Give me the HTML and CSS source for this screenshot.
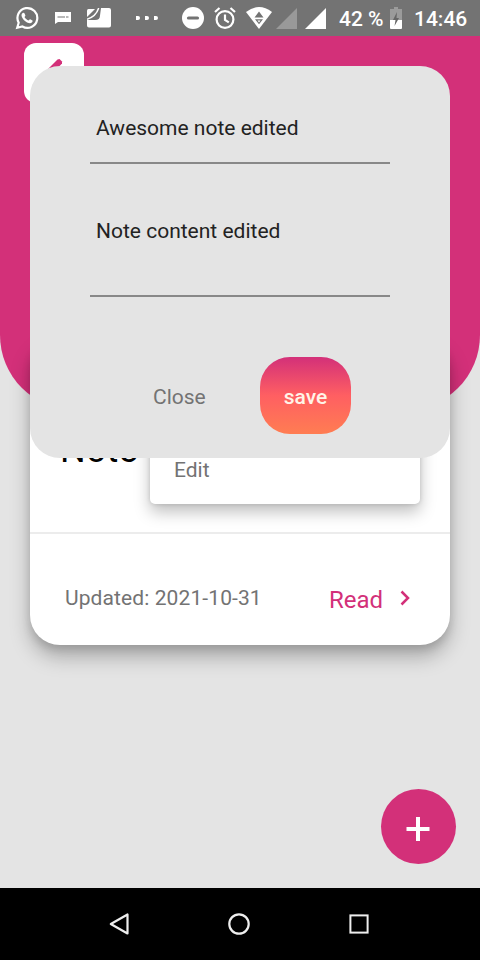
FILE: index.html
```html
<!DOCTYPE html>
<html lang="en">
<head>
<meta charset="utf-8">
<title>Notes</title>
<link rel="stylesheet" href="styles.css">
</head>
<body>
<div class="phone">
  <header class="status">
    <svg class="whatsapp" width="24" height="24" viewBox="0 0 24 24"><path d="M2.200 21.800l1.500-5.100A9.900 9.900 0 1 1 7.400 20.500z" fill="none" stroke="#fff" stroke-width="2.200"/><path d="M8.200 6.700c-.5 0-1.700.9-1.700 2.500 0 3.100 4.800 8 8.500 8 1.700 0 2.700-1.300 2.700-2.400 0-.5-2.100-1.500-2.700-1.600-.6-.1-1 1.300-1.600 1.300-.9 0-3.700-2.400-3.800-3.400 0-.5.9-.9.8-1.500-.1-.6-.8-2.400-1.200-2.700z" fill="#fff"/></svg>
    <svg class="message" width="16" height="12" viewBox="0 0 16 12"><path d="M0 0h16v10H3l-3 2z" fill="#fff"/><path d="M2.500 5h7.500M11 5h2.500" stroke="#737373" stroke-width="1.200"/></svg>
    <svg class="news" width="24" height="20" viewBox="0 0 24 20"><path d="M14 0h8q2 0 2 2v15.500q0 2-2 2H2q-2 0-2-2V12h8q5 0 5-4.500z" fill="#fff"/><path d="M0 2.500Q0 1 1.500 1H8L0 9z" fill="#fff"/><path d="M0 11.200Q9 8.500 11.700 0" fill="none" stroke="#fff" stroke-width="1.500"/></svg>
    <svg class="more" width="24" height="4" viewBox="0 0 24 4"><path d="M0 0h2q2 0 2 2t-2 2H0zM9 0h2q2 0 2 2t-2 2H9zM18 0h2q2 0 2 2t-2 2h-2z" fill="#fff"/></svg>
    <svg class="dnd" width="22" height="22" viewBox="0 0 22 22"><circle cx="11" cy="11" r="11" fill="#fff"/><path d="M6.500 11h9" stroke="#737373" stroke-width="3.200" stroke-linecap="round"/></svg>
    <svg class="alarm" width="22" height="22" viewBox="0 0 22 22"><g fill="none" stroke="#fff" stroke-width="2.200"><circle cx="11" cy="12.500" r="8.400"/><path d="M11 7.500v5.500l3.800 2.400M1 5l4.500-4M21 5l-4.500-4"/></g></svg>
    <svg class="wifi" width="26" height="22" viewBox="0 0 26 22"><path d="M0 5Q13-5 26 5L13 22z" fill="#fff"/><path d="M13 4.500l4.500 6h-9zM9 12.200h8l-4 5z" fill="#737373"/><path d="M11.500 13.500h3L13 15.500z" fill="#fff"/></svg>
    <svg class="signal faint" width="21" height="21" viewBox="0 0 21 21"><path d="M0 21L21 0v21z" fill="#999"/></svg>
    <svg class="signal" width="21" height="21" viewBox="0 0 21 21"><path d="M0 21L21 0v21z" fill="#fff"/></svg>
    <span class="percent">42 %</span>
    <svg class="battery" width="12" height="22" viewBox="0 0 12 22"><path d="M0 2h4V0h4v2h4v11H0z" fill="#9b9b9b"/><path d="M0 13h12v8q0 1-1 1H1q-1 0-1-1z" fill="#fff"/><path d="M7 5L3 13h2.500L4.500 19 9 11H6.500z" fill="#666"/></svg>
    <span class="clock">14:46</span>
  </header>
  <main class="app">
    <div class="hero">
      <div class="logo"><svg width="60" height="60" viewBox="0 0 60 60"><path d="M13 42l2-7 18.500-18.500 2-.5 2.500 2.500v2L20 39z" fill="#d33079"/></svg></div>
    </div>
    <article class="card">
      <div class="card-head"><h2>Note</h2></div>
      <div class="card-foot">
        <span class="updated">Updated: 2021-10-31</span>
        <span class="read">Read</span>
        <svg class="chevron" width="10" height="16" viewBox="0 0 10 16"><path d="M1.500 1.500L8 8l-6.500 6.500" fill="none" stroke="#d33079" stroke-width="2.500"/></svg>
      </div>
    </article>
    <div class="menu">Edit</div>
    <section class="dialog">
      <div class="field title">Awesome note edited</div>
      <div class="field content">Note content edited</div>
      <div class="actions"><span class="close">Close</span><span class="save">save</span></div>
    </section>
    <div class="fab"><svg width="24" height="24" viewBox="0 0 24 24"><path d="M12 0v24M.5 12h23" stroke="#fff" stroke-width="4"/></svg></div>
  </main>
  <nav class="nav">
    <svg width="24" height="24" viewBox="0 0 24 24"><path d="M20.500 2.500v19L3.800 12z" fill="none" stroke="#eee" stroke-width="2.200" stroke-linejoin="round"/></svg>
    <svg width="24" height="24" viewBox="0 0 24 24"><circle cx="12" cy="12" r="9.700" fill="none" stroke="#eee" stroke-width="2.200"/></svg>
    <svg width="24" height="24" viewBox="0 0 24 24"><rect x="3.400" y="3.400" width="17.200" height="17.200" fill="none" stroke="#eee" stroke-width="2"/></svg>
  </nav>
</div>
</body>
</html>
```
FILE: styles.css
```css
* { box-sizing: border-box; }
body { margin: 0; font-family: Roboto, "Liberation Sans", sans-serif; font-size: 21px; }
svg { display: block; flex: none; }
.phone { width: 480px; height: 960px; display: flex; flex-direction: column; overflow: hidden; background: #e4e4e4; }
.status { height: 36px; flex: none; display: flex; align-items: center; background: #737373; color: #fff; padding-left: 15px; font-weight: 500; white-space: nowrap; }
.message { margin-left: 16px; }
.news { margin-left: 16px; }
.more { margin-left: 25px; }
.dnd { margin-left: 22px; }
.alarm { margin-left: 10px; }
.wifi { margin-left: 10px; }
.signal { margin-left: 8px; }
.signal.faint { margin-left: 4px; }
.percent { width: 45px; margin: 2px 0 0 13px; }
.battery { margin-left: 6px; }
.clock { margin: 2px 0 0 12px; }
.app { position: relative; flex: 1; }
.hero { height: 374px; padding: 7px 24px; background: #d33079; border-radius: 0 0 75px 75px; }
.logo { width: 60px; height: 60px; border-radius: 12px; background: #fff; overflow: hidden; }
.card { position: relative; width: 420px; height: 309px; margin: -74px 30px 0; background: #fff; border-radius: 30px; box-shadow: 0 12px 20px rgba(0, 0, 0, .26), 0 4px 8px rgba(0, 0, 0, .12); }
.card-head { height: 198px; padding: 93px 30px 0; border-bottom: 2px solid #ececec; }
h2 { margin: 0; font-size: 36px; line-height: 42px; font-weight: 400; color: #000; letter-spacing: .2px; }
.card-foot { display: flex; align-items: center; height: 111px; padding: 16px 40px 0 35px; color: #737373; }
.updated { flex: 1; letter-spacing: .1px; }
.read { margin-top: 4px; font-size: 24px; color: #d33079; }
.chevron { margin-left: 17px; }
.menu { position: absolute; left: 150px; top: 380px; width: 270px; height: 88px; padding: 42px 24px 0; line-height: 24px; color: #737373; background: #fff; border-radius: 5px; box-shadow: 0 8px 16px rgba(0, 0, 0, .25), 0 0 4px rgba(0, 0, 0, .14); }
.dialog { position: absolute; left: 30px; top: 30px; width: 420px; height: 392px; padding: 34px 60px 0; background: #e4e4e4; border-radius: 30px; color: #222; }
.field { padding: 16px 6px 0; line-height: 24px; border-bottom: 2px solid #888; }
.title { height: 64px; }
.content { height: 103px; margin-top: 30px; padding-top: 25px; }
.actions { display: flex; align-items: center; margin-top: 60px; padding-left: 63px; }
.close { width: 107px; padding-top: 2px; color: #737373; }
.save { width: 91px; height: 77px; padding-top: 2px; border-radius: 30px; background: linear-gradient(#d33079, #ff5f62 50%, #ff7d52); color: #fff4e8; font-weight: 500; line-height: 77px; text-align: center; }
.fab { position: absolute; left: 381px; top: 753px; width: 75px; height: 75px; padding: 4px 1px 0 0; border-radius: 50%; background: #d33079; display: flex; align-items: center; justify-content: center; }
.nav { height: 72px; flex: none; display: flex; align-items: center; justify-content: center; gap: 96px; padding-right: 2px; background: #000; }
```
